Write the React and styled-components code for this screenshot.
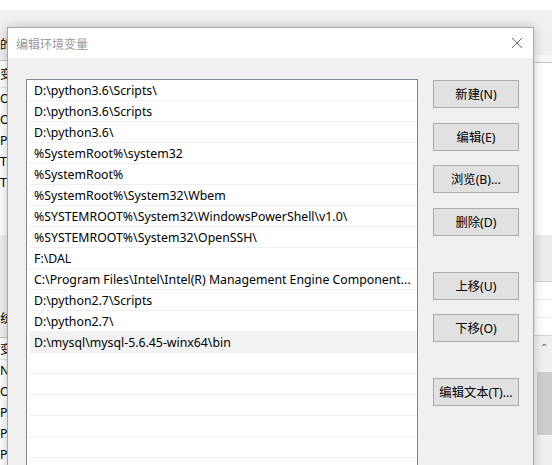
import React from "react";
import styled, { createGlobalStyle } from "styled-components";

const Global = createGlobalStyle`
  html, body { margin: 0; padding: 0; background: #fff; }
  body { font-family: "Noto Sans", "Noto Sans CJK SC", sans-serif; }
  * { box-sizing: border-box; }
`;

const Desktop = styled.div`
  position: relative;
  width: 552px;
  height: 465px;
  overflow: hidden;
  background: #fff;
`;

/* ---------- background window (mostly hidden under the dialog) ---------- */
const BgWindow = styled.div`
  display: flex;
  flex-direction: column;
  height: 100%;
  padding-top: 10px;
`;

const BgBody = styled.div`
  flex: 1;
  display: flex;
  background: #f0f0f0;
`;

const Peek = styled.div`
  width: ${(p) => p.$w}px;
  display: flex;
  flex-direction: column;
  overflow: hidden;
  white-space: nowrap;
  font-size: 12.3px;
  color: #000;
`;

const Hidden = styled.div`
  flex: 1;
`;

const Band = styled.div`
  height: ${(p) => p.$h}px;
  flex: none;
  display: flex;
  align-items: center;
  background: ${(p) => p.$bg || "transparent"};
  border-bottom: ${(p) => (p.$line ? `1px solid ${p.$line}` : "none")};
`;

const GroupLabel = styled.div`
  height: ${(p) => p.$h}px;
  flex: none;
  display: flex;
  align-items: flex-end;
  padding-bottom: ${(p) => p.$pb}px;
  margin-left: ${(p) => p.$shift || 0}px;
`;

const BgList = styled.div`
  display: flex;
  flex-direction: column;
  background: #fff;
  height: ${(p) => p.$h}px;
  flex: none;
  border-top: 1px solid #c8c8c8;
`;

const Thumb = styled.div`
  margin: 0 0 0 2px;
  height: 63px;
  background: #cdcdcd;
`;

const ScrollArea = styled.div`
  flex: 1;
  display: flex;
  flex-direction: column;
  background: #f0f0f0;
`;

const Arrow = styled.div`
  height: 36px;
  display: flex;
  justify-content: center;
  padding-top: 4px;
  color: #606060;
  font-size: 10px;
`;

/* ---------- dialog ---------- */
const Dialog = styled.div`
  position: absolute;
  left: 7px;
  top: 27px;
  width: 527px;
  height: 460px;
  border: 1px solid #a8a8a8;
  background: #f0f0f0;
  box-shadow: 0 0 10px rgba(0, 0, 0, 0.22);
  display: flex;
  flex-direction: column;
`;

const TitleBar = styled.div`
  height: 30px;
  flex: none;
  background: #fff;
  display: flex;
  align-items: center;
  justify-content: space-between;
  padding: 0 10px 0 8px;
`;

const Title = styled.span`
  font-family: "Noto Sans CJK SC", sans-serif;
  font-size: 12px;
  color: #9a9a9a;
`;

const Close = styled.div`
  width: 12px;
  height: 12px;
  display: flex;
`;

const Body = styled.div`
  flex: 1;
  display: flex;
  gap: 15px;
  padding: 21px 0 0 18px;
`;

const List = styled.div`
  width: 392px;
  height: 420px;
  flex: none;
  background: #fff;
  border: 1px solid #828790;
  padding: 0 0 0 3px;
  display: flex;
  flex-direction: column;
`;

const Row = styled.div`
  height: 21px;
  flex: none;
  border-bottom: 1px solid #f0f0f0;
  background: ${(p) => (p.$selected ? "#f2f2f2" : "transparent")};
  display: flex;
  align-items: center;
  padding: 1px 0 0 4px;
  font-size: 12.3px;
  color: #000;
  white-space: nowrap;
  overflow: hidden;
`;

const Buttons = styled.div`
  width: 86px;
  display: flex;
  flex-direction: column;
  padding-top: 1px;
`;

const Button = styled.button`
  height: 28px;
  margin-top: ${(p) => p.$before}px;
  background: #e1e1e1;
  border: 1px solid #adadad;
  font-family: "Noto Sans", "Noto Sans CJK SC", sans-serif;
  font-size: 12.3px;
  color: #000;
  padding: 0;
  display: flex;
  align-items: center;
  justify-content: center;
`;

const paths = [
  "D:\\python3.6\\Scripts\\",
  "D:\\python3.6\\Scripts",
  "D:\\python3.6\\",
  "%SystemRoot%\\system32",
  "%SystemRoot%",
  "%SystemRoot%\\System32\\Wbem",
  "%SYSTEMROOT%\\System32\\WindowsPowerShell\\v1.0\\",
  "%SYSTEMROOT%\\System32\\OpenSSH\\",
  "F:\\DAL",
  "C:\\Program Files\\Intel\\Intel(R) Management Engine Component...",
  "D:\\python2.7\\Scripts",
  "D:\\python2.7\\",
  "D:\\mysql\\mysql-5.6.45-winx64\\bin",
  "", "", "", "", "", "",
];

const buttons = [
  { label: "新建(N)", before: 0 },
  { label: "编辑(E)", before: 15 },
  { label: "浏览(B)...", before: 14 },
  { label: "删除(D)", before: 15 },
  { label: "上移(U)", before: 36 },
  { label: "下移(O)", before: 14 },
  { label: "编辑文本(T)...", before: 36 },
];

export default function App() {
  return (
    <>
      <Global />
      <Desktop>
        <BgWindow>
          <BgBody>
            <Peek $w={8}>
              <GroupLabel $h={50} $pb={7}>的用户变量(U)</GroupLabel>
              <BgList $h={175}>
                <Band $h={27} $line="#e5e5e5">变量</Band>
                <Band $h={21}>OneDrive</Band>
                <Band $h={21}>OneDriveConsumer</Band>
                <Band $h={21}>Path</Band>
                <Band $h={21}>TEMP</Band>
                <Band $h={21}>TMP</Band>
              </BgList>
              <GroupLabel $h={102} $pb={10} $shift={-12}>系统变量(S)</GroupLabel>
              <BgList $h={130}>
                <Band $h={22} $line="#e5e5e5">变量</Band>
                <Band $h={21}>NUMBER_OF_PROCESSORS</Band>
                <Band $h={21}>OS</Band>
                <Band $h={21}>Path</Band>
                <Band $h={21}>PATHEXT</Band>
                <Band $h={21}>PROCESSOR_ARCHITECTURE</Band>
              </BgList>
            </Peek>
            <Hidden />
            <Peek $w={17}>
              <Band $h={45} />
              <Band $h={8} $bg="#f7f7f7" $line="#c4c4c4" />
              <Band $h={172} $bg="#fff" />
              <Band $h={47} $bg="#ececec" $line="#cfcfcf" />
              <Band $h={18} $bg="#fff" $line="#eeeeee" />
              <Band $h={18} $bg="#fff" $line="#eeeeee" />
              <Band $h={18} $bg="#fff" $line="#d4d4d4" />
              <ScrollArea>
                <Arrow>⌃</Arrow>
                <Thumb />
              </ScrollArea>
            </Peek>
          </BgBody>
        </BgWindow>

        <Dialog>
          <TitleBar>
            <Title>编辑环境变量</Title>
            <Close>
              <svg width="12" height="12" viewBox="0 0 12 12">
                <path d="M1 1 L11 11 M11 1 L1 11" stroke="#6f6f6f" strokeWidth="1" fill="none" />
              </svg>
            </Close>
          </TitleBar>
          <Body>
            <List>
              {paths.map((p, i) => (
                <Row key={i} $selected={i === 12}>{p}</Row>
              ))}
            </List>
            <Buttons>
              {buttons.map((b) => (
                <Button key={b.label} $before={b.before}>{b.label}</Button>
              ))}
            </Buttons>
          </Body>
        </Dialog>
      </Desktop>
    </>
  );
}
